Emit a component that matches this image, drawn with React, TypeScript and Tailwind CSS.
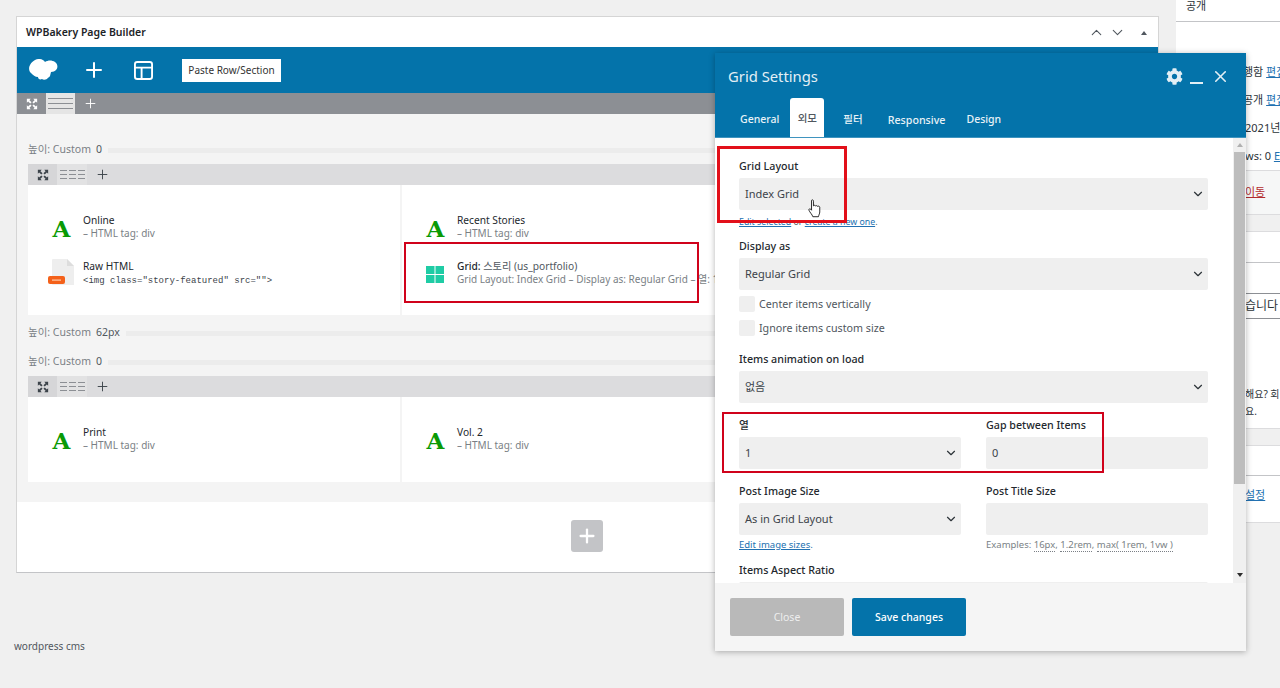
import { ChevronDown, ChevronUp, Plus, X } from 'lucide-react';
import { FaCog } from 'react-icons/fa';
import type { ReactNode } from 'react';

const font = 'font-["Noto_Sans","Noto_Sans_CJK_KR",sans-serif]';

function ExpandIcon({ className }: { className?: string }) {
  return (
    <svg viewBox="0 0 14 14" className={className} fill="currentColor">
      <path d="M1 1h4.500L4 2.500 6.500 5 5 6.500 2.500 4 1 5.500zM13 1v4.500L11.500 4 9 6.500 7.500 5 10 2.500 8.500 1zM1 13V8.500L2.500 10 5 7.500 6.500 9 4 11.500 5.500 13zM13 13H8.500L10 11.500 7.500 9 9 7.500 11.500 10 13 8.500z" />
    </svg>
  );
}

function Cloud() {
  return (
    <svg viewBox="0 0 30 22" className="w-[30px] h-[22px]" fill="#fff">
      <path d="M7 1c4-2 8-1 10 2 3-2 7-2 10 0 3 2 3 6 1 8-1 1-3 2-5 2l-1 4c-1 2-2 1-3 3-2 1-4 1-5 0-2 1-4 0-4-2-3 0-5-2-7-4C0 12 0 5 7 1z" />
    </svg>
  );
}

function HeightLabel({ value }: { value: string }) {
  return (
    <div className="flex items-center h-4 text-[10.500px] text-[#7a7f85]">
      <span>높이: Custom</span>
      <span className="ml-[5px] text-[#50575e]">{value}</span>
      <div className="flex-1 ml-[6px] h-[5px] bg-[#ececec]" />
    </div>
  );
}

function ControlBar() {
  return (
    <div className="flex h-[21px] bg-[#dcdcde] text-[#3c434a]">
      <div className="w-[29px] flex items-center justify-center bg-[#d6d6d8]">
        <ExpandIcon className="w-[12px] h-[12px]" />
      </div>
      <div className="w-[30px] flex items-center justify-center gap-[2px] bg-[#e2e2e3]">
        {[0, 1, 2].map((i) => (
          <div key={i} className="w-[7px] h-[9px] border-y border-[#8c8f94] flex items-center">
            <div className="w-full h-px bg-[#8c8f94]" />
          </div>
        ))}
      </div>
      <div className="w-[30px] flex items-center justify-center">
        <Plus size={15} strokeWidth={1.5} />
      </div>
    </div>
  );
}

function LetterIcon() {
  return (
    <span className='w-[18px] text-center text-[23px] leading-none font-bold text-[#0a9a05] font-["DejaVu_Serif",serif]'>
      A
    </span>
  );
}

function GridIcon() {
  return (
    <svg viewBox="0 0 18 17" className="w-[18px] h-[17px] -ml-[2px]" fill="#1fcca5">
      <rect x="0" y="0" width="8.500" height="8" />
      <rect x="9.500" y="0" width="8.500" height="8" />
      <rect x="0" y="9" width="8.500" height="8" />
      <rect x="9.500" y="9" width="8.500" height="8" />
    </svg>
  );
}

function HtmlIcon() {
  return (
    <svg viewBox="0 0 26 26" className="w-[26px] h-[26px] -mt-[4px] -ml-[2px]">
      <path d="M4 1q0-1 1-1h14l7 7v19H5q-1 0-1-1z" fill="#eeeeee" />
      <path d="M19 0l7 7h-7z" fill="#dddddd" />
      <rect x="0" y="17" width="17" height="8" rx="2" fill="#f4611a" />
      <rect x="4" y="20.500" width="9" height="1.200" fill="#ffc9a8" />
    </svg>
  );
}

function Element({
  icon,
  title,
  children,
  mono,
}: {
  icon: ReactNode;
  title: ReactNode;
  children: ReactNode;
  mono?: boolean;
}) {
  return (
    <div className="flex items-center h-[46px]">
      <div className="w-[55px] flex justify-center shrink-0 pl-[12px] pt-[2px]">{icon}</div>
      <div className="whitespace-nowrap">
        <div className="text-[10.200px] leading-[13px] text-[#23282d]">{title}</div>
        <div
          className={
            mono
              ? 'text-[9px] leading-[13px] pt-[2px] -mb-[2px] text-[#3c434a] font-["Liberation_Mono",monospace]'
              : 'text-[10px] leading-[13px] text-[#7a7f85]'
          }
        >
          {children}
        </div>
      </div>
    </div>
  );
}

function Row({ left, right, className }: { left: ReactNode; right: ReactNode; className: string }) {
  return (
    <div className={`flex bg-white ${className}`}>
      <div className="w-[372px] pt-[19px]">{left}</div>
      <div className="w-[2px] bg-[#f4f4f4]" />
      <div className="flex-1 pt-[19px]">{right}</div>
    </div>
  );
}

function Label({ children }: { children: ReactNode }) {
  return <div className="text-[10.700px] leading-[15px] font-medium text-[#23282d] mb-[4px]">{children}</div>;
}

function Select({ value }: { value: string }) {
  return (
    <div className="flex items-center justify-between h-8 pl-[6px] pr-[3px] bg-[#efefef] rounded-[2px] text-[11px] text-[#3c434a]">
      <span>{value}</span>
      <ChevronDown size={14} strokeWidth={2} className="text-[#2c3338]" />
    </div>
  );
}

function Check({ label }: { label: string }) {
  return (
    <div className="flex items-center gap-1 h-4 text-[10.700px] text-[#50575e]">
      <div className="w-4 h-4 bg-[#efefef] rounded-[2px]" />
      <span>{label}</span>
    </div>
  );
}

function Sidebar() {
  return (
    <aside className="w-[104px] h-[523px] ml-[17px] shrink-0 bg-white border-b border-[#dcdcde] overflow-hidden text-[11px] text-[#2c3338] whitespace-nowrap">
      <div className="h-[22px] pl-[10px] leading-[11px] border-b border-[#c3c4c7]">공개</div>
      <div className="pl-[67px] mt-[43px] h-[14px] leading-[14px]">
        행함 <span className="text-[#2271b1] underline">편집</span>
      </div>
      <div className="pl-[67px] mt-[14px] h-[14px] leading-[14px]">
        공개 <span className="text-[#2271b1] underline">편집</span>
      </div>
      <div className="pl-[69px] mt-[14px] h-[14px] leading-[14px]">2021년 1월</div>
      <div className="pl-[69px] mt-[14px] h-[14px] leading-[14px]">
        ws: 0 <span className="text-[#2271b1] underline">Edit</span>
      </div>
      <div className="mt-[7px] h-[44px] pl-[69px] flex items-center bg-[#f6f7f7] border-t border-[#dcdcde] text-[#b32d2e] underline">
        이동
      </div>
      <div className="h-[18px] bg-[#f0f0f0] border-y border-[#dcdcde]" />
      <div className="h-[31px] border-b border-[#c3c4c7]" />
      <div className="mt-[30px] h-[26px] pl-[69px] flex items-center border-y border-[#8c8f94] text-[12px]">
        습니다
      </div>
      <div className="mt-[31px] ml-[69px] w-px h-[24px] bg-[#8c8f94]" />
      <div className="mt-[12px] pl-[69px] h-[17px] leading-[17px] text-[10px]">해요? 회</div>
      <div className="pl-[69px] h-[17px] leading-[17px] text-[10px]">요.</div>
      <div className="mt-[8px] h-[18px] bg-[#f0f0f0] border-y border-[#dcdcde]" />
      <div className="h-[30px] border-b border-[#c3c4c7]" />
      <div className="mt-[11px] pl-[69px] text-[#2271b1] underline">설정</div>
    </aside>
  );
}

function Dialog() {
  return (
    <div className="absolute left-[715px] top-[53px] w-[531px] h-[598px] flex flex-col bg-white shadow-[0_1px_6px_rgba(0,0,0,0.3)]">
      <header className="h-[85px] shrink-0 bg-[#0473aa] border-b border-[#3f94bf] flex flex-col">
        <div className="flex items-center h-[46px] pl-[13px] pt-[2px] text-[#e3eff5]">
          <span className="text-[14.800px]">Grid Settings</span>
          <div className="ml-auto flex items-center">
            <FaCog size={17} className="mr-[7px]" />
            <div className="w-[13px] h-[2px] bg-[#e3eff5] mt-[13px] mr-[8px]" />
            <X size={19} strokeWidth={2} className="mr-[16px]" />
          </div>
        </div>
        <nav className="flex-1 flex text-[10.500px] font-medium text-[#e8f2f7]">
          <span className="ml-[25px] mt-[14px]">General</span>
          <span className="ml-[11px] w-[34px] h-[39px] pt-[2px] flex items-center justify-center bg-white rounded-t-[3px] text-[#50575e]">
            외모
          </span>
          <span className="ml-[19px] mt-[14px]">필터</span>
          <span className="ml-[25px] mt-[14px] text-[10.700px]">Responsive</span>
          <span className="ml-[21px] mt-[14px]">Design</span>
        </nav>
      </header>

      <div className="relative flex-1 overflow-hidden pl-[24px] pr-[38px] pt-[21px]">
        <Label>Grid Layout</Label>
        <Select value="Index Grid" />
        <div className="mt-[6px] h-[12px] leading-[12px] text-[8.800px] text-[#50575e]">
          <span className="text-[#2271b1] underline">Edit selected</span> or{' '}
          <span className="text-[#2271b1] underline">create a new one</span>.
        </div>
        <div className="mt-[11px]">
          <Label>Display as</Label>
          <Select value="Regular Grid" />
        </div>
        <div className="mt-[6px] flex flex-col gap-2">
          <Check label="Center items vertically" />
          <Check label="Ignore items custom size" />
        </div>
        <div className="mt-[16px]">
          <Label>Items animation on load</Label>
          <Select value="없음" />
        </div>
        <div className="mt-[15px] grid grid-cols-2 gap-x-[25px]">
          <div>
            <Label>열</Label>
            <Select value="1" />
          </div>
          <div>
            <Label>Gap between Items</Label>
            <div className="flex items-center h-8 pl-[6px] bg-[#efefef] rounded-[2px] text-[11px] text-[#3c434a]">0</div>
          </div>
          <div className="mt-[15px]">
            <Label>Post Image Size</Label>
            <Select value="As in Grid Layout" />
            <div className="mt-[4px] text-[9.500px] leading-[12px] text-[#2271b1]">
              <span className="underline">Edit image sizes</span>.
            </div>
          </div>
          <div className="mt-[15px]">
            <Label>Post Title Size</Label>
            <div className="h-8 bg-[#efefef] rounded-[2px]" />
            <div className="mt-[4px] text-[9.500px] leading-[12px] text-[#7a7f85]">
              Examples: <span className="border-b border-dotted border-[#7a7f85]">16px</span>,{' '}
              <span className="border-b border-dotted border-[#7a7f85]">1.2rem</span>,{' '}
              <span className="border-b border-dotted border-[#7a7f85]">max( 1rem, 1vw )</span>
            </div>
          </div>
        </div>
        <div className="mt-[12px]">
          <Label>Items Aspect Ratio</Label>
          <div className="h-8 bg-[#efefef] rounded-[2px]" />
        </div>

        {/* scrollbar */}
        <div className="absolute right-0 top-0 bottom-0 w-[13px] bg-[#f0f0f0] flex flex-col items-center">
          <div className="h-[14px] flex items-center">
            <div className="border-x-[3px] border-x-transparent border-b-[4px] border-b-[#b0b0b0]" />
          </div>
          <div className="w-[11px] h-[332px] bg-[#bdbdbd]" />
          <div className="mt-auto mb-[6px] border-x-[3px] border-x-transparent border-t-[4px] border-t-[#2c2c2c]" />
        </div>
      </div>

      <footer className="h-[68px] shrink-0 bg-[#f5f5f5] flex items-start gap-2 pl-[15px] pt-[15px] text-[10.500px]">
        <button className="w-[114px] h-[38px] pt-[1px] bg-[#b9b9b9] rounded-[2px] text-[#eeeeee]">Close</button>
        <button className="w-[114px] h-[38px] pt-[1px] bg-[#0473aa] rounded-[2px] text-white font-medium">Save changes</button>
      </footer>
    </div>
  );
}

export default function App() {
  return (
    <div className={`relative w-[1280px] h-[688px] overflow-hidden bg-[#f0f0f0] flex ${font}`}>
      <div className="w-[1159px] shrink-0 pl-4 pt-4">
        <section className="w-[1143px] h-[557px] flex flex-col bg-white border border-[#d5d5d5] border-b-[#c3c4c7]">
          <div className="h-[30px] shrink-0 flex items-center pl-[9px] pt-[1px] text-[10.500px] font-semibold text-[#1d2327]">
            WPBakery Page Builder
            <div className="ml-auto flex items-center text-[#50575e]">
              <ChevronUp size={17} strokeWidth={1.5} />
              <ChevronDown size={17} strokeWidth={1.5} className="ml-[4px]" />
              <div className="ml-[15px] mr-[11px] border-x-[3px] border-x-transparent border-b-[4px] border-b-[#50575e]" />
            </div>
          </div>
          <div className="h-[46px] shrink-0 flex items-center bg-[#0473aa] pl-[11px]">
            <Cloud />
            <Plus size={24} strokeWidth={2} className="text-white ml-[24px]" />
            <svg viewBox="0 0 20 20" className="w-[19px] h-[19px] ml-[28px]" fill="none" stroke="#fff" strokeWidth="2">
              <rect x="1" y="1" width="18" height="18" rx="2.500" />
              <path d="M1 7h18M8 7v12" />
            </svg>
            <button className="ml-[29px] h-[23px] w-[99px] bg-white text-[10px] text-[#333]">Paste Row/Section</button>
          </div>
          <div className="h-[21px] shrink-0 flex bg-[#8c8f94] text-white">
            <div className="w-[29px] flex items-center justify-center">
              <ExpandIcon className="w-[12px] h-[12px]" />
            </div>
            <div className="w-[29px] flex items-center justify-center bg-[#e5e5e5]">
              <div className="w-[25px] h-[11px] border-y border-[#8c8f94] flex items-center">
                <div className="w-full h-px bg-[#8c8f94]" />
              </div>
            </div>
            <div className="w-[30px] flex items-center justify-center">
              <Plus size={15} strokeWidth={1.5} />
            </div>
          </div>
          <div className="h-[388px] shrink-0 bg-[#f4f4f4] pl-[11px] pr-[11px] pt-[28px]">
            <HeightLabel value="0" />
            <div className="mt-[6px]">
              <ControlBar />
            </div>
            <Row
              className="h-[130px]"
              left={
                <>
                  <Element icon={<LetterIcon />} title="Online">
                    – HTML tag: div
                  </Element>
                  <Element icon={<HtmlIcon />} title="Raw HTML" mono>
                    {'<img class="story-featured" src="">'}
                  </Element>
                </>
              }
              right={
                <>
                  <Element icon={<LetterIcon />} title="Recent Stories">
                    – HTML tag: div
                  </Element>
                  <Element
                    icon={<GridIcon />}
                    title={
                      <>
                        <span className="font-medium">Grid:</span> <span className="text-[#50575e]">스토리 (us_portfolio)</span>
                      </>
                    }
                  >
                    Grid Layout: Index Grid – Display as: Regular Grid – 열: 1 – Gap between Items: 0
                  </Element>
                </>
              }
            />
            <div className="mt-[10px]">
              <HeightLabel value="62px" />
            </div>
            <div className="mt-[13px]">
              <HeightLabel value="0" />
            </div>
            <div className="mt-[6px]">
              <ControlBar />
            </div>
            <Row
              className="h-[85px]"
              left={
                <Element icon={<LetterIcon />} title="Print">
                  – HTML tag: div
                </Element>
              }
              right={
                <Element icon={<LetterIcon />} title="Vol. 2">
                  – HTML tag: div
                </Element>
              }
            />
          </div>
          <div className="flex-1 flex justify-center pt-[18px] pr-[2px]">
            <div className="w-8 h-8 rounded-[3px] bg-[#c3c4c7] flex items-center justify-center text-white">
              <Plus size={22} strokeWidth={2.5} />
            </div>
          </div>
        </section>
        <div className="mt-[66px] -ml-[2px] text-[10px] text-[#50575e]">wordpress cms</div>
      </div>
      <Sidebar />
      <Dialog />

      {/* red annotation boxes */}
      <div className="absolute left-[404px] top-[242px] w-[295px] h-[61px] border-2 border-[#d0021b]" />
      <div className="absolute left-[717px] top-[146px] w-[130px] h-[77px] border-[3px] border-[#e2101a]" />
      <div className="absolute left-[722px] top-[412px] w-[382px] h-[61px] border-2 border-[#d0021b]" />
      {/* cursor */}
      <svg viewBox="0 0 16 22" className="absolute left-[808px] top-[199px] w-[14px] h-[19px]" fill="#fff" stroke="#222" strokeWidth="1.100">
        <path d="M4 1.500c1-1 2.200-.5 2.200 1V8c.6-1 2.200-1 2.500.2.600-.9 2.100-.7 2.300.4.700-.7 2.300-.4 2.500 1V15c0 2-1 3-1.500 5.500H5.500C4.800 18 2 15.500 1 13c-.5-1.200.9-2.300 2-1.200L4 13z" />
      </svg>
    </div>
  );
}
